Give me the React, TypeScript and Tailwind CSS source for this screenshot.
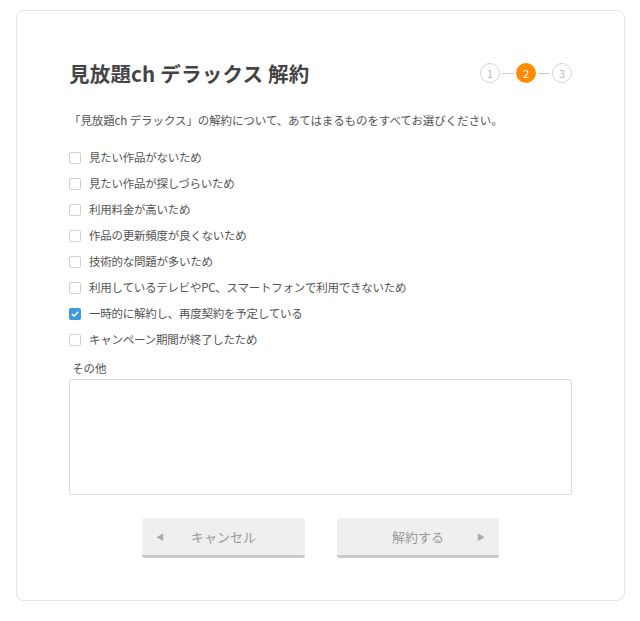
import React, { useState } from "react";

const reasons = [
  "見たい作品がないため",
  "見たい作品が探しづらいため",
  "利用料金が高いため",
  "作品の更新頻度が良くないため",
  "技術的な問題が多いため",
  "利用しているテレビやPC、スマートフォンで利用できないため",
  "一時的に解約し、再度契約を予定している",
  "キャンペーン期間が終了したため",
];

function Step({ n, active }: { n: number; active?: boolean }) {
  return (
    <div
      className={
        active
          ? "flex h-5 w-5 items-center justify-center rounded-full bg-[#ff8c00] text-[11px] text-white"
          : "flex h-5 w-5 items-center justify-center rounded-full border border-[#d6d6d6] text-[11px] text-[#bbb]"
      }
    >
      {n}
    </div>
  );
}

export default function App() {
  const [checked, setChecked] = useState<boolean[]>(reasons.map((_, i) => i === 6));

  return (
    <div className="min-h-screen bg-white pt-[10px] pl-4 pr-[15px] font-['Noto_Sans_CJK_JP','Noto_Sans',sans-serif] text-[#555]">
      <div className="h-[591px] rounded-lg border border-[#e3e3e3] px-[52px] pt-[47px]">
        {/* Header */}
        <div className="flex h-[30px] items-center justify-between">
          <h1 className="text-[20.5px] font-bold tracking-[0.2px] text-[#444]">見放題ch デラックス 解約</h1>
          <div className="flex items-center gap-[2px]">
            <Step n={1} />
            <div className="h-px w-[12px] bg-[#ccc]" />
            <Step n={2} active />
            <div className="h-px w-[12px] bg-[#ccc]" />
            <Step n={3} />
          </div>
        </div>

        <p className="mt-[24px] text-[11.5px] leading-4 tracking-[-0.1px]">
          「見放題ch デラックス」の解約について、あてはまるものをすべてお選びください。
        </p>

        {/* Reasons */}
        <ul className="mt-[22px] flex flex-col gap-[10px]">
          {reasons.map((r, i) => (
            <li key={r}>
              <label className="flex h-4 cursor-pointer items-center gap-[8px] text-[11.5px] tracking-[-0.25px]">
                <span
                  onClick={() => setChecked((c) => c.map((v, j) => (j === i ? !v : v)))}
                  className={
                    checked[i]
                      ? "flex h-3 w-3 items-center justify-center rounded-[2px] bg-[#3b9be0]"
                      : "h-3 w-3 rounded-[2px] border border-[#d0d0d0] bg-white"
                  }
                >
                  {checked[i] && (
                    <svg viewBox="0 0 12 12" className="h-[10px] w-[10px]">
                      <path d="M2.3 6.2 L4.9 8.6 L9.7 3.4" fill="none" stroke="white" strokeWidth="1.8" />
                    </svg>
                  )}
                </span>
                {r}
              </label>
            </li>
          ))}
        </ul>

        {/* Other */}
        <div className="mt-[12px] pl-[3px] text-[11.5px] leading-4">その他</div>
        <textarea className="mt-[3px] block h-[116px] w-full resize-none rounded-[2px] border border-[#dcdcdc] outline-none" />

        {/* Buttons */}
        <div className="mt-[23px] flex justify-center gap-[32px]">
          <button className="relative flex h-[40px] w-[163px] items-center justify-center rounded-[3px] border-b-[3px] border-[#c9c9c9] bg-[#efefef] text-[13px] text-[#999]">
            <span className="absolute left-[14px] text-[8px] text-[#aaa]">◀</span>
            キャンセル
          </button>
          <button className="relative flex h-[40px] w-[162px] items-center justify-center rounded-[3px] border-b-[3px] border-[#c9c9c9] bg-[#efefef] text-[13px] text-[#999]">
            解約する
            <span className="absolute right-[14px] text-[8px] text-[#aaa]">▶</span>
          </button>
        </div>
      </div>
    </div>
  );
}
